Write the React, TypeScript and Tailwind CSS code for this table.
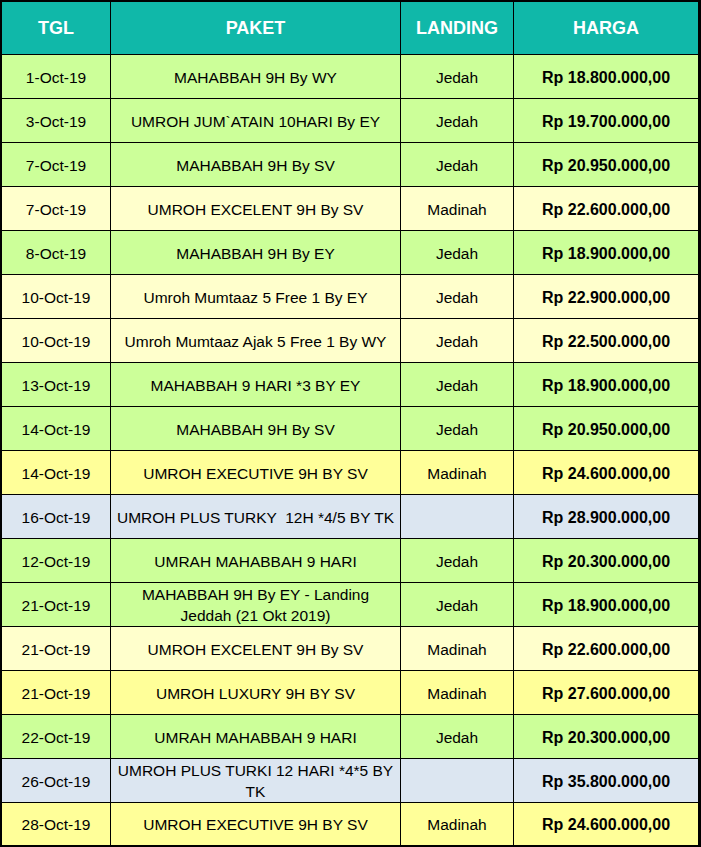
import React from "react";

type Row = { tgl: string; paket: React.ReactNode; landing: string; harga: string; bg: string };

const G = "bg-[#CCFF99]";
const LY = "bg-[#FFFFCC]";
const Y = "bg-[#FFFF99]";
const B = "bg-[#DCE6F1]";

const rows: Row[] = [
  { tgl: "1-Oct-19", paket: "MAHABBAH 9H By WY", landing: "Jedah", harga: "Rp 18.800.000,00", bg: G },
  { tgl: "3-Oct-19", paket: "UMROH JUM`ATAIN 10HARI By EY", landing: "Jedah", harga: "Rp 19.700.000,00", bg: G },
  { tgl: "7-Oct-19", paket: "MAHABBAH 9H By SV", landing: "Jedah", harga: "Rp 20.950.000,00", bg: G },
  { tgl: "7-Oct-19", paket: "UMROH EXCELENT 9H By SV", landing: "Madinah", harga: "Rp 22.600.000,00", bg: LY },
  { tgl: "8-Oct-19", paket: "MAHABBAH 9H By EY", landing: "Jedah", harga: "Rp 18.900.000,00", bg: G },
  { tgl: "10-Oct-19", paket: "Umroh Mumtaaz 5 Free 1 By EY", landing: "Jedah", harga: "Rp 22.900.000,00", bg: LY },
  { tgl: "10-Oct-19", paket: "Umroh Mumtaaz Ajak 5 Free 1 By WY", landing: "Jedah", harga: "Rp 22.500.000,00", bg: LY },
  { tgl: "13-Oct-19", paket: "MAHABBAH 9 HARI *3 BY EY", landing: "Jedah", harga: "Rp 18.900.000,00", bg: G },
  { tgl: "14-Oct-19", paket: "MAHABBAH 9H By SV", landing: "Jedah", harga: "Rp 20.950.000,00", bg: G },
  { tgl: "14-Oct-19", paket: "UMROH EXECUTIVE 9H BY SV", landing: "Madinah", harga: "Rp 24.600.000,00", bg: Y },
  { tgl: "16-Oct-19", paket: "UMROH PLUS TURKY  12H *4/5 BY TK", landing: "", harga: "Rp 28.900.000,00", bg: B },
  { tgl: "12-Oct-19", paket: "UMRAH MAHABBAH 9 HARI", landing: "Jedah", harga: "Rp 20.300.000,00", bg: G },
  {
    tgl: "21-Oct-19",
    paket: (
      <>
        MAHABBAH 9H By EY - Landing
        <br />
        Jeddah (21 Okt 2019)
      </>
    ),
    landing: "Jedah",
    harga: "Rp 18.900.000,00",
    bg: G,
  },
  { tgl: "21-Oct-19", paket: "UMROH EXCELENT 9H By SV", landing: "Madinah", harga: "Rp 22.600.000,00", bg: LY },
  { tgl: "21-Oct-19", paket: "UMROH LUXURY 9H BY SV", landing: "Madinah", harga: "Rp 27.600.000,00", bg: Y },
  { tgl: "22-Oct-19", paket: "UMRAH MAHABBAH 9 HARI", landing: "Jedah", harga: "Rp 20.300.000,00", bg: G },
  {
    tgl: "26-Oct-19",
    paket: (
      <>
        UMROH PLUS TURKI 12 HARI *4*5 BY
        <br />
        TK
      </>
    ),
    landing: "",
    harga: "Rp 35.800.000,00",
    bg: B,
  },
  { tgl: "28-Oct-19", paket: "UMROH EXECUTIVE 9H BY SV", landing: "Madinah", harga: "Rp 24.600.000,00", bg: Y },
];

const cell = "flex items-center justify-center text-center whitespace-pre text-[15.5px] leading-[21px] text-black pt-px";
const head = "flex items-center justify-center bg-[#10B8A9] text-white font-bold text-[18px]";

export default function App() {
  return (
    <div className="w-[701px] h-[847px] bg-white font-['Liberation_Sans',Arial,sans-serif]">
      <div className="w-[701px] h-[847px] bg-black border-l-2 border-t-2 border-b-2 border-r-[3px] border-black grid grid-cols-[108px_289px_112px_184px] grid-rows-[52px_repeat(17,43px)_42px] gap-px">
        <div className={head}>TGL</div>
        <div className={head}>PAKET</div>
        <div className={head}>LANDING</div>
        <div className={head}>HARGA</div>
        {rows.map((r, i) => (
          <React.Fragment key={i}>
            <div className={`${cell} ${r.bg}`}>{r.tgl}</div>
            <div className={`${cell} ${r.bg}`}>
              <span>{r.paket}</span>
            </div>
            <div className={`${cell} ${r.bg}`}>{r.landing}</div>
            <div className={`${cell} ${r.bg} font-bold text-[16px]`}>{r.harga}</div>
          </React.Fragment>
        ))}
      </div>
    </div>
  );
}
